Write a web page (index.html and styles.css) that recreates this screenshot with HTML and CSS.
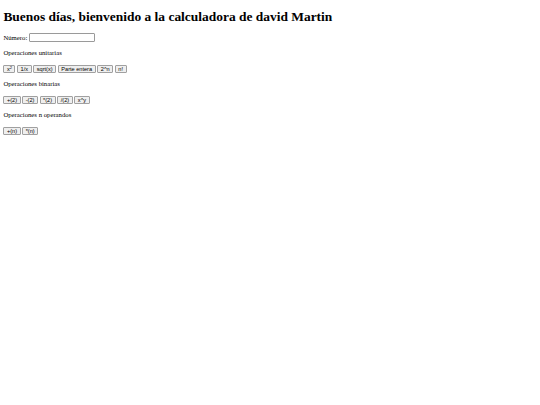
FILE: index.html
```html
<!DOCTYPE html>
<html lang="es">
<head>
<meta charset="utf-8">
<title>Calculadora</title>
<link rel="stylesheet" href="styles.css">
</head>
<body class="page">
<h1 class="title">Buenos días, bienvenido a la calculadora de david Martin</h1>
<div class="field"><label class="label" for="num">Número:</label><input class="input" id="num" type="text"></div>
<p class="section">Operaciones unitarias</p>
<div class="buttons">
<button class="btn">x<sup class="sup">2</sup></button>
<button class="btn">1/x</button>
<button class="btn">sqrt(x)</button>
<button class="btn">Parte entera</button>
<button class="btn">2^n</button>
<button class="btn">n!</button>
</div>
<p class="section">Operaciones binarias</p>
<div class="buttons">
<button class="btn">+(2)</button>
<button class="btn">-(2)</button>
<button class="btn">*(2)</button>
<button class="btn">/(2)</button>
<button class="btn">x^y</button>
</div>
<p class="section">Operaciones n operandos</p>
<div class="buttons">
<button class="btn">+(n)</button>
<button class="btn">*(n)</button>
</div>
</body>
</html>
```
FILE: styles.css
```css
html, body {
  background: #fff;
}
.page {
  margin: 3.4px;
  font-family: "Liberation Serif", "Times New Roman", serif;
  font-size: 6.72px;
  color: #000;
}
.title {
  font-size: 13.44px;
  font-weight: bold;
  margin: 5.6px 0 9px;
  line-height: 15.5px;
}
.field {
  display: flex;
  align-items: center;
  gap: 1.7px;
  height: 9px;
}
.input {
  width: 64px;
  height: 7px;
  border: 1px solid #9a9a9a;
  border-radius: 1px;
  padding: 0;
  margin: 0;
  font-size: 5.6px;
  box-sizing: content-box;
  background: #fff;
}
.section {
  margin: 7px 0;
  line-height: 8px;
}
.buttons {
  display: flex;
  align-items: center;
  gap: 1.7px;
  height: 9px;
}
.btn {
  font-family: "Liberation Sans", Arial, sans-serif;
  font-size: 5.6px;
  line-height: 6.5px;
  padding: 0.4px 2.5px;
  height: 8.5px;
  margin: 0;
  background: #efefef;
  border: 1px solid #a0a0a0;
  border-radius: 1px;
  color: #000;
}
.sup {
  font-size: 4px;
  vertical-align: 1.8px;
  line-height: 0;
}
```
